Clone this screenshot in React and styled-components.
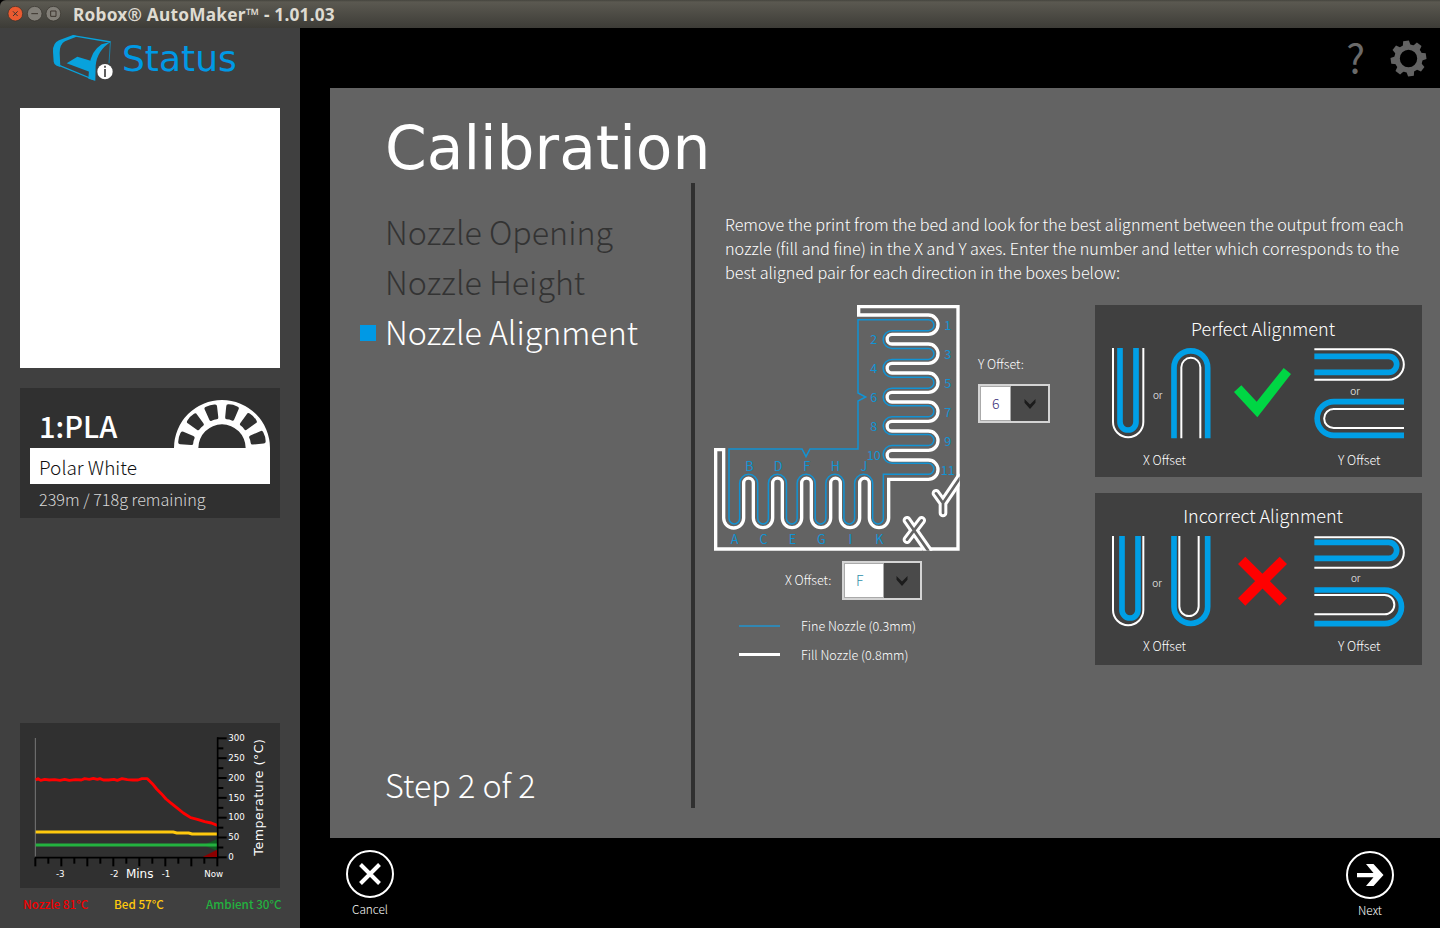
import React from 'react';
import styled, { createGlobalStyle } from 'styled-components';

const GlobalStyle = createGlobalStyle`
  * { box-sizing: border-box; }
  html, body { margin: 0; padding: 0; background: #000; overflow: hidden; }
  svg { display: block; flex: none; }
`;

const BLUE = '#0099e5';
const LINE_BLUE = '#1293d4';
const SANS = '"Noto Sans CJK SC", "Noto Sans", sans-serif';
const DEJAVU = '"DejaVu Sans", sans-serif';

const Window = styled.div`
  width: 1440px;
  height: 928px;
  display: grid;
  grid-template-rows: 28px 900px;
  background: #000;
  color: #fff;
  font-family: ${SANS};
  font-weight: 300;
  white-space: nowrap;
`;

const TitleBar = styled.header`
  display: flex;
  align-items: center;
  padding-left: 7px;
  background: linear-gradient(#45443e 0, #5b5951 2px, #3d3c37 100%);
  border-top-left-radius: 6px;
`;

const WindowTitle = styled.h1`
  margin: 0 0 0 11px;
  padding-top: 1px;
  font: 700 17.3px/28px "Noto Sans", sans-serif;
  letter-spacing: 0.21px;
  color: #dfdbd2;
`;

const Body = styled.div`
  display: grid;
  grid-template-columns: 300px 1140px;
`;

const Sidebar = styled.aside`
  display: flex;
  flex-direction: column;
  background: #404040;
  padding: 0 20px;
`;

const StatusHeader = styled.div`
  display: flex;
  height: 80px;
  padding: 5px 0 0 30px;
`;

const StatusTitle = styled.h2`
  margin: 0 0 0 8px;
  font: 400 36px/52px ${DEJAVU};
  color: ${BLUE};
`;

const Preview = styled.div`
  height: 260px;
  background: #fff;
`;

const ReelCard = styled.section`
  display: flex;
  flex-direction: column;
  height: 130px;
  margin-top: 20px;
  padding: 11px 10px 0;
  background: #303030;
`;

const ReelTop = styled.div`
  display: flex;
  justify-content: space-between;
  align-items: flex-end;
  height: 49px;
`;

const ReelName = styled.div`
  padding-left: 9px;
  font-size: 29px;
  font-weight: 500;
  line-height: 46px;
`;

const ReelColour = styled.div`
  height: 36px;
  padding-left: 9px;
  background: #fff;
  color: #111;
  font-size: 19px;
  line-height: 38px;
`;

const ReelRemaining = styled.div`
  padding-left: 9px;
  font-size: 16.2px;
  line-height: 31px;
  color: #d8d8d8;
`;

const ChartCard = styled.section`
  width: 260px;
  height: 165px;
  margin-top: auto;
  background: #303030;
`;

const Readings = styled.div`
  display: grid;
  grid-template-columns: 91px 92px 1fr;
  height: 40px;
  padding: 6px 0 0 3px;
  margin-right: -6px;
`;

const Reading = styled.span`
  font-size: 11.7px;
  font-weight: 500;
  line-height: 20px;
  color: ${(p) => p.$color};
`;

const Main = styled.main`
  display: grid;
  grid-template-rows: 60px 750px 90px;
  padding-left: 30px;
`;

const Toolbar = styled.div`
  display: flex;
  justify-content: flex-end;
  align-items: center;
  gap: 25px;
  padding-right: 13px;
`;

const HelpMark = styled.span`
  padding-bottom: 3px;
  font-size: 39.5px;
  font-weight: 400;
  line-height: 56px;
  color: #6a6a6a;
`;

const Panel = styled.section`
  display: grid;
  grid-template-columns: 361px 4px 745px;
  grid-template-rows: 95px 625px 30px;
  background: #636363;
`;

const PanelTitle = styled.h2`
  grid-column: 1 / -1;
  margin: 0;
  padding: 25px 0 0 55px;
  font: 400 59.8px/70px ${DEJAVU};
`;

const Steps = styled.nav`
  display: flex;
  flex-direction: column;
  padding: 25px 0 0 30px;
`;

const Step = styled.div`
  display: flex;
  align-items: center;
  gap: 9px;
  height: 50px;
  font-size: 32.2px;
  line-height: 46px;
  color: ${(p) => (p.$active ? '#fff' : '#333')};

  &::before {
    content: '';
    width: 16px;
    height: 16px;
    background: ${(p) => (p.$active ? BLUE : 'transparent')};
  }
`;

const StepLabel = styled.span`
  padding-bottom: 4px;
`;

const StepCount = styled.div`
  margin-top: auto;
  padding: 0 0 1px 25px;
  font-size: 32.3px;
  line-height: 46px;
`;

const Divider = styled.div`
  background: #303030;
`;

const Content = styled.div`
  padding: 29px 0 0 5px;
`;

const Instructions = styled.p`
  margin: 0;
  padding-left: 25px;
  font-size: 16.2px;
  line-height: 24px;
`;

const Columns = styled.div`
  display: grid;
  grid-template-columns: 394.5px 327px;
  padding-top: 11px;
`;

const Figure = styled.div`
  display: grid;
  grid-template-columns: 270px 1fr;
  grid-template-rows: 266px 39px auto;
`;

const YField = styled.div`
  display: flex;
  flex-direction: column;
  padding: 59px 0 0 8px;
`;

const XField = styled.div`
  grid-column: 1 / -1;
  display: flex;
  align-items: center;
  padding-left: 85px;
`;

const FieldLabel = styled.label`
  width: ${(p) => p.$width || 'auto'};
  font-size: 12.6px;
  line-height: 20px;
  margin-bottom: ${(p) => p.$below || 0};
`;

const Combo = styled.div`
  display: flex;
  width: ${(p) => p.$width};
  height: 39px;
  border: 2px solid #d4d4d4;
  background: #4a4a4a;
`;

const ComboValue = styled.span`
  width: ${(p) => p.$width};
  padding-left: 11px;
  border: 1px solid #aaa;
  background: #fff;
  color: ${(p) => p.$color};
  font-size: 14px;
  line-height: 32px;
`;

const ComboButton = styled.span`
  flex: 1;
  display: flex;
  align-items: center;
  justify-content: center;
`;

const Legend = styled.div`
  grid-column: 1 / -1;
  padding: 11px 0 0 39px;
`;

const LegendRow = styled.div`
  display: flex;
  align-items: center;
  gap: 21px;
  height: 29px;
  font-size: 12.6px;
`;

const Swatch = styled.span`
  width: 41px;
  height: ${(p) => p.$weight};
  background: ${(p) => p.$color};
`;

const Cards = styled.div`
  display: flex;
  flex-direction: column;
  gap: 16px;
  padding-top: 10px;
`;

const Card = styled.section`
  height: 172px;
  background: #404040;
`;

const CardTitle = styled.h3`
  margin: 0;
  padding: 8px 0 0 10px;
  height: 43px;
  text-align: center;
  font-size: 18px;
  font-weight: 300;
  line-height: ${(p) => p.$line || '30px'};
`;

const Captions = styled.div`
  display: flex;
  justify-content: space-between;
  padding: ${(p) => p.$top} 41px 0 48.5px;
  font-size: 12.6px;
  line-height: 20px;
`;

const Footer = styled.footer`
  display: flex;
  justify-content: space-between;
  padding: 12px 46px 0 16px;
`;

const RoundButton = styled.button`
  display: flex;
  flex-direction: column;
  align-items: center;
  width: 48px;
  margin: ${(p) => p.$offset || 0} 0 0;
  padding: 0;
  border: 0;
  background: none;
  color: #fff;
  font: 300 11.8px/22px ${SANS};
`;

function WindowButtons() {
  return (
    <svg width="55" height="16" viewBox="21 20 165 48">
      <circle cx="46" cy="43" r="22" fill="#ea5a30" stroke="#33302b" strokeWidth="2" />
      <circle cx="104" cy="43" r="22" fill="#827f78" stroke="#33302b" strokeWidth="2" />
      <circle cx="160" cy="43" r="22" fill="#827f78" stroke="#33302b" strokeWidth="2" />
      <path d="M39 36l14 14m0-14L39 50M94 43h20M152 35h16v16h-16z" fill="none" stroke="#3c352e" strokeWidth="3" />
    </svg>
  );
}

function PrinterLogo() {
  return (
    <svg width="64" height="50" viewBox="150 99 192 150">
      <g fill="#08a2dc">
        <path d="M219 105l-42 16q-19 8-18 34l2 30q1 9 9 12l11 4-2-42q0-26 16-35l38-15z" />
        <path d="M333 125l-28 8q-33 21-37 66l-3 37 21 6 1-45q4-46 46-72z" />
        <path d="M232 170l35 11 20 6-7 10-12 18-68-25z" />
      </g>
      <path d="M218 107l114 19" fill="none" stroke="#08a2dc" strokeWidth="4" />
      <path d="M331 128l-4 62" fill="none" stroke="#08a2dc" strokeWidth="2" />
      <path d="M172 194l112 46" fill="none" stroke="#08a2dc" strokeWidth="4" />
      <circle cx="315" cy="215" r="23" fill="#fff" />
      <path d="M315 207v24m0-34v6" stroke="#404040" strokeWidth="5" />
    </svg>
  );
}

const REEL_ANGLES = [-76, -45.5, -15.5, 14.5, 45, 75];

function Reel() {
  return (
    <svg width="96" height="48" viewBox="491 60 288 144">
      <path d="M491 204a144 144 0 0 1 288 0h-73a71 71 0 0 0-142 0z" fill="#fff" />
      {REEL_ANGLES.map((a) => (
        <path
          key={a}
          d="M622 72q13-3 26 0 8 1 6 8l-5 32q-1 6-6 5-8-2-16 0-5 1-6-5l-5-32q-2-7 6-8z"
          fill="#303030"
          transform={`rotate(${a} 635 204)`}
        />
      ))}
    </svg>
  );
}

const TEMPS = [300, 250, 200, 150, 100, 50, 0];

function TemperatureChart() {
  const text = { fontFamily: 'DejaVu Sans', fill: '#fff', fontWeight: 400 };
  return (
    <svg width="260" height="165" viewBox="30 24 780 495">
      <path d="M76 69v356" stroke="#777" strokeWidth="3" />
      <path d="M580 390l42-18v36z" fill="#125c22" />
      <path d="M77 390h545" stroke="#23b23f" strokeWidth="9" />
      <path d="M77 351h413l10 3h36l10 3h76" fill="none" stroke="#ffc90e" strokeWidth="9" />
      <path
        d="M77 195L84 191 92 196 104 193 118 195 134 194 150 196 164 193 178 196 196 194 214 195 224 191 238 193 250 190 262 193 270 191 280 195 296 195 312 193 322 196 336 191 352 194 368 195 384 195 396 191 412 191 427 206 440 222 454 236 468 252 484 265 500 278 520 294 542 308 562 313 584 320 604 324 622 331"
        fill="none"
        stroke="#f00"
        strokeWidth="8.500"
        strokeLinejoin="round"
      />
      <path d="M623 67v362M75 428h550" stroke="#000" strokeWidth="5" />
      <path d="M578 426l43-22v22z" fill="#8c0000" />
      {TEMPS.map((t, i) => (
        <g key={t}>
          <path d={`M622 ${70 + i * 59.5}h28`} stroke="#000" strokeWidth="6" />
          {i < 6 && <path d={`M622 ${100 + i * 59.5}h18`} stroke="#000" strokeWidth="6" />}
          <text x="655" y={78 + i * 59.5} fontSize="26" {...text}>{t}</text>
        </g>
      ))}
      {Array.from({ length: 15 }, (_, i) => (
        <path key={i} d={`M${76 + i * 39} 428v${i % 2 ? 18 : 26}`} stroke="#000" strokeWidth="6" />
      ))}
      <g {...text} fontSize="26" textAnchor="middle">
        <text x="151" y="486">-3</text>
        <text x="313" y="486">-2</text>
        <text x="468" y="486">-1</text>
        <text x="611" y="486">Now</text>
      </g>
      <text x="389" y="488" fontSize="36" textAnchor="middle" {...text}>Mins</text>
      <text transform="translate(759 422) rotate(-90)" fontSize="38" textLength="350" {...text}>Temperature (°C)</text>
    </svg>
  );
}

const WHITE_STEP = 87;
const BLUE_STEP = 86.2;

function fillPath() {
  let d = 'M668 762H47V464H71V669';
  for (let i = 0; i < 6; i += 1) {
    const x = 73 + i * WHITE_STEP;
    d += `${i === 0 ? '' : `V669`}A29 29 0 0 0 ${x + 58} 669`;
    if (i < 5) d += `V564A14.5 14.5 0 0 1 ${x + WHITE_STEP} 564`;
  }
  d += 'V553H685';
  for (let i = 5; i >= 0; i -= 1) {
    const y = 60 + i * WHITE_STEP;
    d += `A29 29 0 0 0 685 ${y}`;
    if (i > 0) d += `H576A14.5 14.5 0 0 1 576 ${y - 29}H685`;
  }
  return `${d}H476V35H774V762H690`;
}

function finePath() {
  let d = 'M474 462H330L318 485L306 462H87V670';
  for (let i = 0; i < 6; i += 1) {
    const x = 87 + i * BLUE_STEP;
    d += `A16 17 0 0 0 ${x + 32} 670`;
    if (i < 5) d += `V565A27 27 0 0 1 ${x + BLUE_STEP} 565V670`;
  }
  d += 'V538H685';
  for (let i = 5; i >= 0; i -= 1) {
    const y = 74 + i * BLUE_STEP;
    d += `A16.5 16.5 0 0 0 685 ${y}`;
    if (i > 0) d += `H576A26.6 26.6 0 0 1 576 ${y - 53.2}H685`;
  }
  return `${d}H474V294L497 306L474 318Z`;
}

const X_TOP = ['B', 'D', 'F', 'H', 'J'];
const X_BOTTOM = ['A', 'C', 'E', 'G', 'I', 'K'];
const LETTER_X = 'M621 676L684 766M665 676L621 734';
const LETTER_Y = 'M708 595L729 624V654M729 624L780 549';

function AlignmentDiagram() {
  return (
    <svg width="270" height="265" viewBox="0 0 810 795">
      <defs>
        <clipPath id="frame"><path d="M0 0H779V767H0z" /></clipPath>
      </defs>
      <path d={fillPath()} fill="none" stroke="#fff" strokeWidth="10" />
      <path d={finePath()} fill="none" stroke={LINE_BLUE} strokeWidth="4.5" />
      <g clipPath="url(#frame)" fill="none" strokeLinecap="round" strokeLinejoin="round">
        <path d={LETTER_X} stroke="#fff" strokeWidth="26" />
        <path d={LETTER_Y} stroke="#fff" strokeWidth="26" />
        <path d={LETTER_X} stroke="#636363" strokeWidth="8" />
        <path d={LETTER_Y} stroke="#636363" strokeWidth="8" />
      </g>
      <g fill={LINE_BLUE} fontSize="38" fontWeight="400" textAnchor="middle">
        {X_TOP.map((c, i) => <text key={c} x={148 + i * 86} y="527">{c}</text>)}
        {X_BOTTOM.map((c, i) => <text key={c} x={104 + i * 86.8} y="746">{c}</text>)}
        {[2, 4, 6, 8, 10].map((n, i) => <text key={n} x="521" y={146 + i * 87.2}>{n}</text>)}
        {[1, 3, 5, 7, 9, 11].map((n, i) => <text key={n} x="743" y={105 + i * 87}>{n}</text>)}
      </g>
    </svg>
  );
}

function PerfectFigure() {
  return (
    <svg width="327" height="91" viewBox="30 159 981 273">
      <g fill="none" stroke="#fff" strokeWidth="6">
        <path d="M84 158V381a45.500 45.500 0 0 0 91 0V158" />
        <path d="M289 430V217a28.500 28.500 0 0 1 57 0V430" />
        <path d="M688 163H911a45.500 45.500 0 0 1 0 91H688" />
        <path d="M957 342H746a28.500 28.500 0 0 0 0 57H957" />
      </g>
      <g fill="none" stroke="#009fe6" strokeWidth="17">
        <path d="M105 158V381a24 24 0 0 0 48 0V158" />
        <path d="M267 430V218a50.500 50.500 0 0 1 101 0V430" />
        <path d="M688 184H911a24 24 0 0 1 0 48H688" />
        <path d="M957 320H747a50.500 50.500 0 0 0 0 101H957" />
      </g>
      <path d="M447 291L469 271 515 320 596 219 618 237 517 367z" fill="#00d644" />
      <g fill="#fff" fontSize="30" textAnchor="middle">
        <text x="218" y="312">or</text>
        <text x="810" y="301">or</text>
      </g>
    </svg>
  );
}

function IncorrectFigure() {
  return (
    <svg width="327" height="91" viewBox="30 153 981 273">
      <g fill="none" stroke="#fff" strokeWidth="6">
        <path d="M84 152V375a45.500 45.500 0 0 0 91 0V152" />
        <path d="M283 152V364a29 29 0 0 0 58 0V152" />
        <path d="M688 157H911a45.500 45.500 0 0 1 0 91H688" />
        <path d="M688 330H899a29 29 0 0 1 0 58H688" />
      </g>
      <g fill="none" stroke="#009fe6" strokeWidth="17">
        <path d="M111 152V375a24 24 0 0 0 48 0V152" />
        <path d="M267 152V365a50.500 50.500 0 0 0 101 0V152" />
        <path d="M688 172H911a24 24 0 0 1 0 48H688" />
        <path d="M688 315H899a50.500 50.500 0 0 1 0 101H688" />
      </g>
      <path d="M470 226L595 351M595 226L470 351" stroke="#f00" strokeWidth="31" />
      <g fill="#fff" fontSize="30" textAnchor="middle">
        <text x="216" y="306">or</text>
        <text x="812" y="291">or</text>
      </g>
    </svg>
  );
}

function Chevron() {
  return (
    <svg width="12" height="12" viewBox="0 0 12 12">
      <path d="M.5 1v3.800L6 11l5.500-6.200V1L6 6.600z" fill="#1c1c1c" />
    </svg>
  );
}

function Gear() {
  return (
    <svg width="37" height="37" viewBox="-18.5 -18.5 37 37">
      <circle r="11.400" fill="none" stroke="#636363" strokeWidth="5.400" />
      {Array.from({ length: 8 }, (_, i) => (
        <path key={i} d="M-4-12.500L-2.900-17.800H2.900L4-12.500z" fill="#636363" transform={`rotate(${i * 45 - 8})`} />
      ))}
    </svg>
  );
}

function CancelIcon() {
  return (
    <svg width="48" height="48" viewBox="0 0 48 48" fill="none" stroke="#fff">
      <circle cx="24" cy="24" r="23" strokeWidth="2" />
      <path d="M14.500 14.500l19 19m0-19l-19 19" strokeWidth="4" />
    </svg>
  );
}

function NextIcon() {
  return (
    <svg width="48" height="48" viewBox="0 0 48 48">
      <circle cx="24" cy="24" r="23" strokeWidth="2" fill="none" stroke="#fff" />
      <path d="M11 22h16.500l-7.500-9h7.500L37.500 24l-10 11H20l7.500-8.700H11z" fill="#fff" />
    </svg>
  );
}

export default function App() {
  return (
    <Window>
      <GlobalStyle />
      <TitleBar>
        <WindowButtons />
        <WindowTitle>Robox® AutoMaker™ - 1.01.03</WindowTitle>
      </TitleBar>
      <Body>
        <Sidebar>
          <StatusHeader>
            <PrinterLogo />
            <StatusTitle>Status</StatusTitle>
          </StatusHeader>
          <Preview />
          <ReelCard>
            <ReelTop>
              <ReelName>1:PLA</ReelName>
              <Reel />
            </ReelTop>
            <ReelColour>Polar White</ReelColour>
            <ReelRemaining>239m / 718g remaining</ReelRemaining>
          </ReelCard>
          <ChartCard>
            <TemperatureChart />
          </ChartCard>
          <Readings>
            <Reading $color="#f00000">Nozzle 81°C</Reading>
            <Reading $color="#ffc90e">Bed 57°C</Reading>
            <Reading $color="#23b23f">Ambient 30°C</Reading>
          </Readings>
        </Sidebar>
        <Main>
          <Toolbar>
            <HelpMark>?</HelpMark>
            <Gear />
          </Toolbar>
          <Panel>
            <PanelTitle>Calibration</PanelTitle>
            <Steps>
              <Step><StepLabel>Nozzle Opening</StepLabel></Step>
              <Step><StepLabel>Nozzle Height</StepLabel></Step>
              <Step $active><StepLabel>Nozzle Alignment</StepLabel></Step>
              <StepCount>Step 2 of 2</StepCount>
            </Steps>
            <Divider />
            <Content>
              <Instructions>
                Remove the print from the bed and look for the best alignment between the output from each
                <br />
                nozzle (fill and fine) in the X and Y axes. Enter the number and letter which corresponds to the
                <br />
                best aligned pair for each direction in the boxes below:
              </Instructions>
              <Columns>
                <Figure>
                  <AlignmentDiagram />
                  <YField>
                    <FieldLabel $below="10px">Y Offset:</FieldLabel>
                    <Combo $width="72px">
                      <ComboValue $width="31px" $color="#39307a">6</ComboValue>
                      <ComboButton><Chevron /></ComboButton>
                    </Combo>
                  </YField>
                  <XField>
                    <FieldLabel $width="57px" $below="2px">X Offset:</FieldLabel>
                    <Combo $width="80px">
                      <ComboValue $width="40px" $color="#2f8fa8">F</ComboValue>
                      <ComboButton><Chevron /></ComboButton>
                    </Combo>
                  </XField>
                  <Legend>
                    <LegendRow><Swatch $weight="2px" $color="#3187b3" />Fine Nozzle (0.3mm)</LegendRow>
                    <LegendRow><Swatch $weight="3px" $color="#fff" />Fill Nozzle (0.8mm)</LegendRow>
                  </Legend>
                </Figure>
                <Cards>
                  <Card>
                    <CardTitle>Perfect Alignment</CardTitle>
                    <PerfectFigure />
                    <Captions $top="11px"><span>X Offset</span><span>Y Offset</span></Captions>
                  </Card>
                  <Card>
                    <CardTitle $line="28px">Incorrect Alignment</CardTitle>
                    <IncorrectFigure />
                    <Captions $top="9px"><span>X Offset</span><span>Y Offset</span></Captions>
                  </Card>
                </Cards>
              </Columns>
            </Content>
          </Panel>
          <Footer>
            <RoundButton><CancelIcon />Cancel</RoundButton>
            <RoundButton $offset="1px"><NextIcon />Next</RoundButton>
          </Footer>
        </Main>
      </Body>
    </Window>
  );
}
